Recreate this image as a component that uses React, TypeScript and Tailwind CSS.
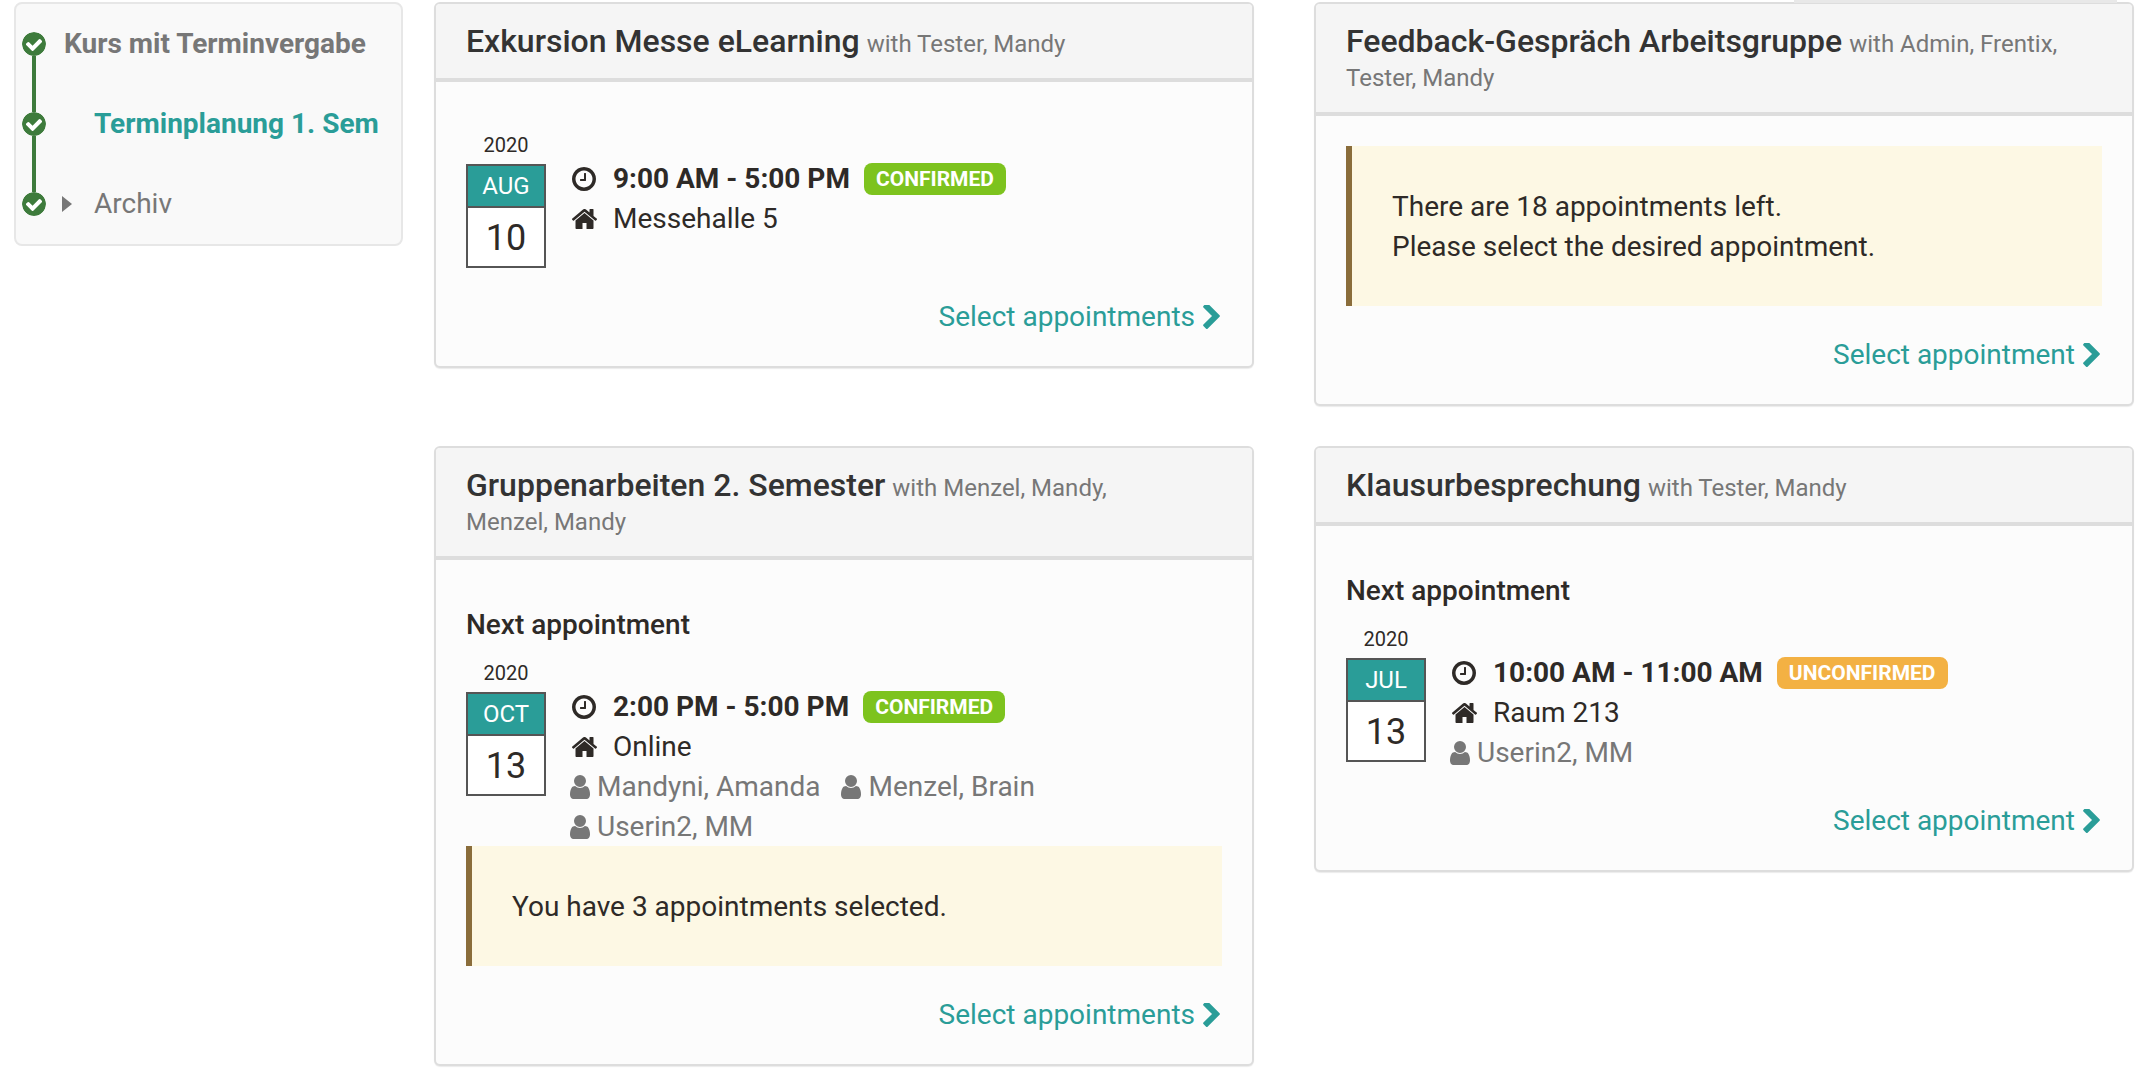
import type { ReactNode } from "react";

const font = { fontFamily: "Roboto, sans-serif" };

function Clock() {
  return (
    <svg viewBox="128 128 1536 1536" className="w-6 h-6 fill-[#2e2a27]">
      <path d="M1024 544v448q0 14-9 23t-23 9h-320q-14 0-23-9t-9-23v-64q0-14 9-23t23-9h224v-352q0-14 9-23t23-9h64q14 0 23 9t9 23zm416 352q0-148-73-273t-198-198-273-73-273 73-198 198-73 273 73 273 198 198 273 73 273-73 198-198 73-273zm224 0q0 209-103 385.5t-279.5 279.5-385.5 103-385.5-103-279.5-279.5-103-385.5 103-385.5 279.5-279.5 385.5-103 385.5 103 279.5 279.5 103 385.5z" />
    </svg>
  );
}

function Home() {
  return (
    <svg viewBox="96 256 1600 1280" className="w-[25px] h-5 fill-[#2e2a27]">
      <path d="M1472 992v480q0 26-19 45t-45 19h-384v-384h-256v384h-384q-26 0-45-19t-19-45v-480q0-1 .5-3t.5-3l575-474 575 474q1 2 1 6zm223-69l-62 74q-8 9-21 11h-3q-13 0-21-7l-692-577-692 577q-12 8-24 7-13-2-21-11l-62-74q-8-10-7-23.5t11-21.5l719-599q32-26 76-26t76 26l244 204v-195q0-14 9-23t23-9h192q14 0 23 9t9 23v408l219 182q10 8 11 21.5t-7 23.5z" />
    </svg>
  );
}

function User() {
  return (
    <svg viewBox="256 128 1280 1536" className="w-5 h-6 fill-[#777777] shrink-0">
      <path d="M1536 1399q0 109-62.5 187t-150.5 78h-854q-88 0-150.5-78t-62.5-187q0-85 8.5-160.5t31.5-152 58.5-131 94-89 134.5-34.5q131 128 313 128t313-128q76 0 134.5 34.5t94 89 58.5 131 31.5 152 8.5 160.5zm-256-887q0 159-112.5 271.5t-271.5 112.5-271.5-112.5-112.5-271.5 112.5-271.5 271.5-112.5 271.5 112.5 112.5 271.5z" />
    </svg>
  );
}

function Chevron() {
  return (
    <svg viewBox="346 154 1036 1484" className="w-[17px] h-6 fill-[#2a9d98]">
      <path d="M1363 877l-742 742q-19 19-45 19t-45-19l-166-166q-19-19-19-45t19-45l531-531-531-531q-19-19-19-45t19-45l166-166q19-19 45-19t45 19l742 742q19 19 19 45t-19 45z" />
    </svg>
  );
}

function CheckDot() {
  return (
    <svg viewBox="128 128 1536 1536" className="w-6 h-6 fill-[#3e7b3c] bg-white rounded-full relative">
      <path d="M1412 734q0-28-18-46l-91-90q-19-19-45-19t-45 19l-408 407-226-226q-19-19-45-19t-45 19l-91 90q-18 18-18 46 0 27 18 45l362 362q19 19 45 19 27 0 46-19l543-543q18-18 18-45zm252 162q0 209-103 385.5t-279.5 279.5-385.5 103-385.5-103-279.5-279.5-103-385.5 103-385.5 279.5-279.5 385.5-103 385.5 103 279.5 279.5 103 385.5z" />
    </svg>
  );
}

function Sidebar() {
  return (
    <div className="relative w-[389px] h-[244px] shrink-0 ml-3.5 bg-[#f9f9f9] border-2 border-[#e7e7e7] rounded-lg text-[28px] leading-10 text-[#777777]">
      <div className="absolute left-4 top-10 h-40 w-1 bg-[#3e7b3c]" />
      <div className="relative flex items-center h-20 pl-1.5">
        <CheckDot />
        <span className="ml-[18px] font-bold">Kurs mit Terminvergabe</span>
      </div>
      <div className="relative flex items-center h-20 pl-1.5">
        <CheckDot />
        <span className="ml-12 font-bold text-[#2a9d98]">Terminplanung 1. Sem</span>
      </div>
      <div className="relative flex items-center h-20 pl-1.5">
        <CheckDot />
        <span className="ml-4 w-0 h-0 border-y-[8px] border-y-transparent border-l-[10px] border-l-[#777777]" />
        <span className="ml-[22px]">Archiv</span>
      </div>
    </div>
  );
}

function DateBox({ month, day }: { month: string; day: string }) {
  return (
    <div className="w-20 shrink-0 text-center">
      <div className="text-[20px] leading-7 h-[33px] text-[#2e2a27]">2020</div>
      <div className="border-2 border-[#555555] h-[104px] bg-white">
        <div className="h-10 bg-[#2a9d98] text-white text-2xl leading-10">{month}</div>
        <div className="border-t-2 border-[#555555] text-[36px] leading-[60px] text-[#2e2a27]">{day}</div>
      </div>
    </div>
  );
}

type ApptProps = {
  month: string;
  day: string;
  time: string;
  place: string;
  status: "CONFIRMED" | "UNCONFIRMED";
  people?: string[];
};

function Appointment({ month, day, time, place, status, people }: ApptProps) {
  const badge = status === "CONFIRMED" ? "bg-[#7dc31e]" : "bg-[#f3b143]";
  return (
    <div className="flex">
      <DateBox month={month} day={day} />
      <div className="flex-1 ml-6 pt-7 -mb-px">
        <div className="flex items-center h-10 font-bold">
          <span className="w-[43px] pl-0.5">
            <Clock />
          </span>
          <span>{time}</span>
          <span className={`ml-3.5 px-3 h-8 rounded-lg text-[21px] leading-8 text-white ${badge}`}>{status}</span>
        </div>
        <div className="flex items-center h-10">
          <span className="w-[43px] pl-0.5">
            <Home />
          </span>
          <span>{place}</span>
        </div>
        {people && (
          <div className="flex flex-wrap gap-x-[21px] text-[#777777]">
            {people.map((p) => (
              <span key={p} className="flex items-center h-10 gap-[7px]">
                <User />
                {p}
              </span>
            ))}
          </div>
        )}
      </div>
    </div>
  );
}

function Alert({ children }: { children: ReactNode }) {
  return <div className="border-l-[6px] border-[#8a6d3b] bg-[#fdf8e4] pt-[41px] pb-[39px] px-10 text-[#2e2a27]">{children}</div>;
}

function SelectLink({ label }: { label: string }) {
  return (
    <div className="flex items-center justify-end gap-2 mt-[29px] -mb-px pr-0.5 h-10 text-[#2a9d98]">
      <span>{label}</span>
      <Chevron />
    </div>
  );
}

function Card({ title, who, children }: { title: string; who: string; children: ReactNode }) {
  return (
    <div className="border-2 border-[#dddddd] rounded-md bg-[#fcfcfc] shadow-[0_1px_1px_rgba(0,0,0,0.08)] overflow-hidden">
      <div className="bg-[#f5f5f5] border-b-4 border-[#dddddd] px-[30px] pt-5 pb-[18px] leading-[34px] text-[#333333]">
        <span className="text-[32px] font-medium">{title}</span>{" "}
        <span className="text-2xl text-[#777777]">{who}</span>
      </div>
      <div className="p-[30px]">{children}</div>
    </div>
  );
}

function NextLabel() {
  return <div className="font-medium leading-10 mb-3.5 text-[#2e2a27]">Next appointment</div>;
}

export default function App() {
  return (
    <div className="relative flex items-start w-[2144px] h-[1078px] pt-0.5 bg-white text-[28px] leading-10 text-[#2e2a27] overflow-hidden" style={font}>
      <div className="absolute left-[1794px] top-0 w-[323px] h-[3px] bg-[#e8e8e8]" />
      <Sidebar />
      <div className="grid grid-cols-2 gap-x-[60px] gap-y-10 items-start w-[1700px] ml-[31px]">
        <Card title="Exkursion Messe eLearning" who="with Tester,&nbsp;Mandy">
          <div className="pt-[19px]">
            <Appointment month="AUG" day="10" time="9:00 AM - 5:00 PM" place="Messehalle 5" status="CONFIRMED" />
          </div>
          <SelectLink label="Select appointments" />
        </Card>
        <Card title="Feedback-Gespräch Arbeitsgruppe" who="with Admin,&nbsp;Frentix, Tester,&nbsp;Mandy">
          <Alert>
            There are 18 appointments left.
            <br />
            Please select the desired appointment.
          </Alert>
          <SelectLink label="Select appointment" />
        </Card>
        <Card title="Gruppenarbeiten 2. Semester" who="with Menzel,&nbsp;Mandy, Menzel,&nbsp;Mandy">
          <div className="pt-[15px]">
            <NextLabel />
            <Appointment
              month="OCT"
              day="13"
              time="2:00 PM - 5:00 PM"
              place="Online"
              status="CONFIRMED"
              people={["Mandyni, Amanda", "Menzel, Brain", "Userin2, MM"]}
            />
          </div>
          <Alert>You have 3 appointments selected.</Alert>
          <SelectLink label="Select appointments" />
        </Card>
        <Card title="Klausurbesprechung" who="with Tester,&nbsp;Mandy">
          <div className="pt-[15px]">
            <NextLabel />
            <Appointment
              month="JUL"
              day="13"
              time="10:00 AM - 11:00 AM"
              place="Raum 213"
              status="UNCONFIRMED"
              people={["Userin2, MM"]}
            />
          </div>
          <SelectLink label="Select appointment" />
        </Card>
      </div>
    </div>
  );
}
